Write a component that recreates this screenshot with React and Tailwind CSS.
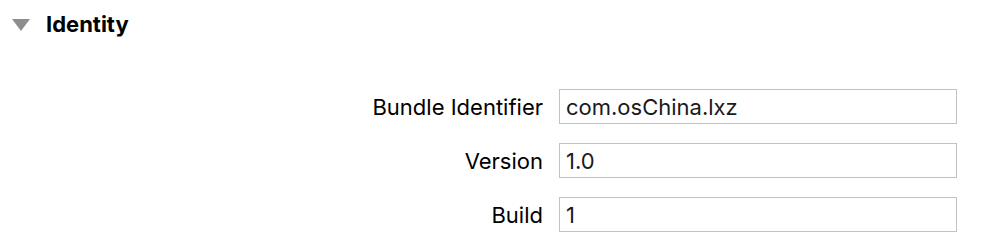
const FIELDS = [
  { label: 'Bundle Identifier', value: 'com.osChina.lxz' },
  { label: 'Version', value: '1.0' },
  { label: 'Build', value: '1' },
];

export default function App() {
  return (
    <div className="w-[1006px] h-[246px] bg-white overflow-hidden text-black" style={{ fontFamily: 'Inter, "Liberation Sans", sans-serif' }}>
      <div className="flex items-center pt-[12px] pl-[12px] h-[36px]">
        <svg width="18" height="12" viewBox="0 0 18 12" className="shrink-0 mt-[1px]">
          <polygon points="0,0 18,0 9,12" fill="#8e8e8e" />
        </svg>
        <span className="ml-[16px] text-[22px] font-bold leading-none">Identity</span>
      </div>

      <div className="flex flex-col gap-[19px] mt-[53px]">
        {FIELDS.map(f => (
          <div key={f.label} className="flex items-center">
            <div className="w-[543px] text-right text-[22px] leading-none">{f.label}</div>
            <div className="ml-[16px] w-[398px] h-[35px] border border-[#c2c2c2] flex items-center pl-[6px] text-[22px] leading-none text-[#1a1a1a]">
              {f.value}
            </div>
          </div>
        ))}
      </div>
    </div>
  );
}
